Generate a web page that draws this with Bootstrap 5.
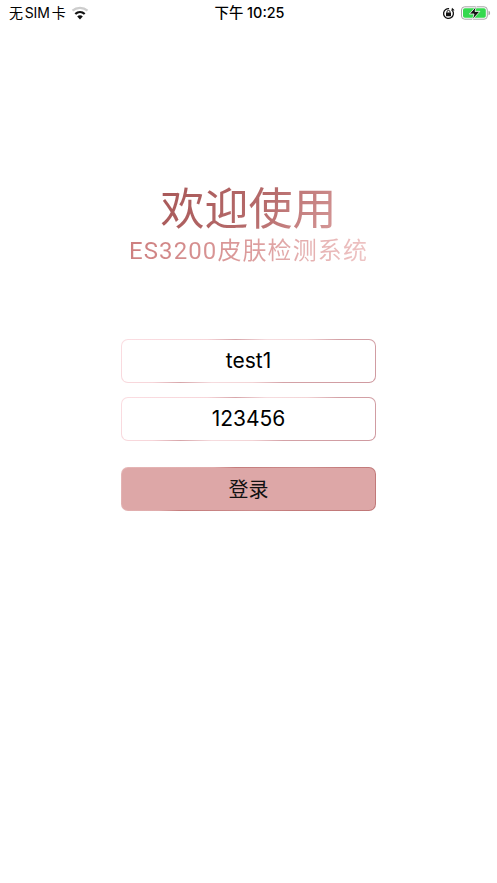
<!DOCTYPE html>
<html lang="zh">
<head>
<meta charset="utf-8">
<meta name="viewport" content="width=device-width, initial-scale=1">
<link rel="stylesheet" href="https://cdn.jsdelivr.net/npm/bootstrap@5.3.0/dist/css/bootstrap.min.css">
<style>
html,body{height:100%;background:#fff}
body{font-family:"Liberation Sans","Noto Sans CJK SC",sans-serif;color:#000;overflow:hidden}
.status-row{height:26px;padding:0 6px 0 9px;line-height:26px}
.status-side{flex:1 1 0}
.status-time{font-weight:500;font-size:14.4px;font-family:"Inter","Noto Sans CJK SC",sans-serif;margin-left:-1px}
.status-carrier{font-size:14px;font-family:"Inter","Noto Sans CJK SC",sans-serif;word-spacing:-1.7px;letter-spacing:-.2px}
.status-gap{gap:6px}
.title-block{margin-top:153px;text-align:center}
.title-main,.title-sub{font-family:"Noto Sans CJK SC",sans-serif;font-weight:400;margin:0;-webkit-background-clip:text;background-clip:text;color:transparent}
.title-main{font-size:44px;line-height:54px;width:176px;margin-inline:auto;background-image:linear-gradient(125deg,#a85858 0%,#b56a6a 55%,#d79a9a 100%)}
.title-sub{font-family:"Roboto","Noto Sans CJK SC",sans-serif;font-size:24px;line-height:30px;letter-spacing:1.1px;width:244px;margin-inline:auto;margin-top:3px;white-space:nowrap;background-image:linear-gradient(100deg,#cd7e7e 0%,#dc9c9c 50%,#efc6c6 100%)}
.login-form{width:255px;margin:73px auto 0}
.pink-field.form-control{display:block;height:44.4px;border:1.2px solid transparent;border-radius:7px;text-align:center;font-family:"Inter","Liberation Sans",sans-serif;font-size:21px;color:#000;padding:0 0 1px;background:linear-gradient(#fff,#fff) padding-box,linear-gradient(142deg,#fbdde2 0%,#f7d6da 28%,#d7a5a9 37%,#f6dcdf 47%,#f3d4d6 60%,#d4a2a7 70%,#cf9aa0 100%) border-box;box-shadow:none}
.pink-field + .pink-field{margin-top:13.3px}
.login-btn.btn{display:block;width:100%;height:44.4px;margin-top:25.9px;border:1.2px solid transparent;border-radius:7px;color:#111;font-family:"Noto Sans CJK SC",sans-serif;font-size:20px;line-height:1;padding:0;background:linear-gradient(#dda7a7,#dda7a7) padding-box,linear-gradient(142deg,#e5b6b6 0%,#e0acac 30%,#c47c7c 37%,#cc8c8c 60%,#c47c7c 72%,#c07878 100%) border-box}
</style>
</head>
<body>
<div class="status-row d-flex align-items-center">
  <div class="status-side d-flex align-items-center status-gap">
    <span class="status-carrier">无 SIM 卡</span>
    <svg width="18" height="14" viewBox="0 0 18 14" aria-hidden="true">
      <path d="M1.5 4.6C5.7.9 12.3.9 16.5 4.6" fill="none" stroke="#cdcdcd" stroke-width="2.2"/>
      <path d="M4.3 8C7 5.6 11 5.6 13.7 8" fill="none" stroke="#111" stroke-width="2.3"/>
      <path d="M9 13.4 6.2 10.4C7.8 9 10.2 9 11.8 10.4Z" fill="#111"/>
    </svg>
  </div>
  <div class="status-time">下午 10:25</div>
  <div class="status-side d-flex align-items-center justify-content-end status-gap">
    <svg width="13" height="13" viewBox="0 0 13 13" aria-hidden="true">
      <circle cx="6.5" cy="6.5" r="4.9" fill="none" stroke="#111" stroke-width="1.3" stroke-dasharray="26 5" transform="rotate(-35 6.5 6.5)"/>
      <rect x="4" y="5.6" width="5" height="3.6" rx=".5" fill="#111"/>
      <path d="M4.9 5.8V5a1.6 1.6 0 0 1 3.2 0v.8" fill="none" stroke="#111" stroke-width=".9"/>
      <path d="M10 .8l2.6 2.4-3.3.7z" fill="#111"/>
    </svg>
    <svg width="30" height="14" viewBox="0 0 30 14" aria-hidden="true">
      <rect x=".5" y=".8" width="25.8" height="12.4" rx="3.2" fill="none" stroke="#a5a5a5" stroke-width="1"/>
      <rect x="2" y="2.3" width="22.8" height="9.4" rx="1.8" fill="#35d94f"/>
      <path d="M27.5 4.8c1 .3 1.6 1.1 1.6 2.2s-.6 1.9-1.6 2.2z" fill="#a5a5a5"/>
      <path d="M15.4.2 8.4 8h4.6l-1.6 5.8 7.4-8.4h-4.8z" fill="#111" stroke="#fff" stroke-width=".8"/>
    </svg>
  </div>
</div>

<main>
  <div class="title-block">
    <h1 class="title-main">欢迎使用</h1>
    <h2 class="title-sub">ES3200皮肤检测系统</h2>
  </div>
  <form class="login-form" onsubmit="return false">
    <input class="form-control pink-field" type="text" value="test1" aria-label="用户名">
    <input class="form-control pink-field" type="text" value="123456" aria-label="密码">
    <button class="btn login-btn" type="submit">登录</button>
  </form>
</main>
<script src="https://cdn.jsdelivr.net/npm/bootstrap@5.3.0/dist/js/bootstrap.bundle.min.js"></script>
</body>
</html>
